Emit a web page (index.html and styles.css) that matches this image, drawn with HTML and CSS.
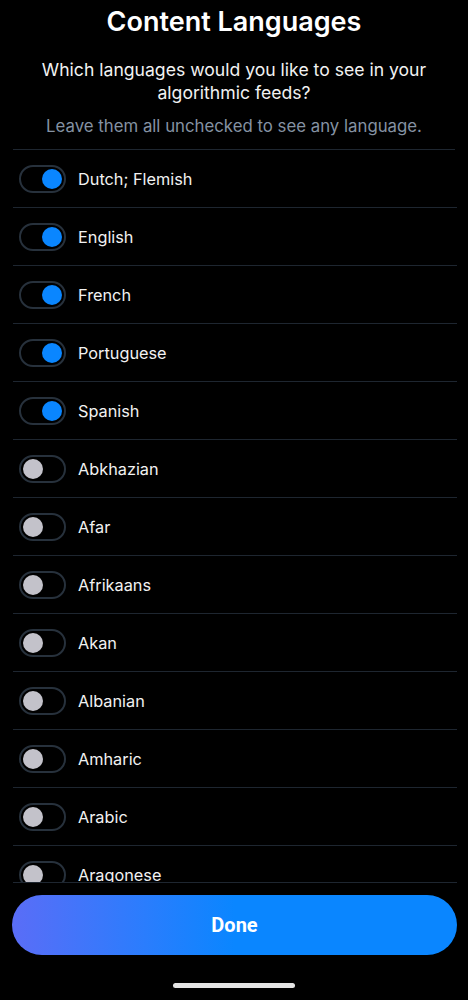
FILE: index.html
```html
<!DOCTYPE html>
<html lang="en">
<head>
  <meta charset="UTF-8">
  <title>Content Languages</title>
  <link rel="stylesheet" href="styles.css">
</head>
<body>

<div class="screen">
  <div class="head">
    <h1>Content Languages</h1>
    <p class="lead">Which languages would you like to see in your algorithmic feeds?</p>
    <p class="hint">Leave them all unchecked to see any language.</p>
  </div>

  <div class="list" id="list"></div>

  <div class="foot">
    <button class="done">Done</button>
    <div class="home-bar"></div>
  </div>
</div>

<script>
const langs = [
  ["Dutch; Flemish", true], ["English", true], ["French", true],
  ["Portuguese", true], ["Spanish", true], ["Abkhazian", false],
  ["Afar", false], ["Afrikaans", false], ["Akan", false],
  ["Albanian", false], ["Amharic", false], ["Arabic", false],
  ["Aragonese", false]
];

const list = document.getElementById("list");
langs.forEach(([name, on]) => {
  list.innerHTML += `
    <div class="row">
      <span class="toggle${on ? " on" : ""}"><span class="knob"></span></span>
      <span class="label">${name}</span>
    </div>`;
});
</script>

</body>
</html>
```

FILE: styles.css
```css
body { margin: 0; background: #000; font-family: Inter, "Noto Sans", sans-serif; color: #f2f2f2; }
.screen { width: 468px; height: 1000px; display: flex; flex-direction: column; }
.head { padding: 0 13px; text-align: center; }
h1 { margin: 3px 0 0; font-size: 27px; font-weight: 600; line-height: 38px; color: #fff; }
.lead { margin: 17px 20px 0; font-size: 17.6px; line-height: 23px; }
.hint { margin: 11px 0 0; font-size: 16.8px; line-height: 22px; color: #8592a3; padding-bottom: 12px; border-bottom: 1px solid #1e2630; }
.list { height: 732px; overflow: hidden; margin: 0 11px 0 13px; border-bottom: 1px solid #1e2630; }
.row { height: 57px; display: flex; align-items: center; gap: 12px; padding-left: 6px; border-bottom: 1px solid #1e2630; }
.toggle { box-sizing: border-box; width: 47px; height: 28px; border: 2px solid #27313c; border-radius: 14px; display: flex; align-items: center; padding: 0 2px; }
.knob { width: 20px; height: 20px; border-radius: 50%; background: #c3c2ca; }
.toggle.on { justify-content: flex-end; }
.toggle.on .knob { background: #0a86ff; }
.label { font-size: 16.3px; }
.foot { flex: 1; display: flex; flex-direction: column; align-items: center; padding-top: 12px; }
.done { width: 445px; height: 60px; border: none; border-radius: 30px; margin-left: 1px; background: linear-gradient(90deg, #5a6df7 0%, #2a7dfd 30%, #0a86ff 50%, #0a86ff 100%); color: #fff; font-family: Roboto, sans-serif; font-size: 20px; font-weight: 700; }
.home-bar { width: 122px; height: 5px; border-radius: 3px; background: #e4e4e4; margin-top: 28px; }
```
